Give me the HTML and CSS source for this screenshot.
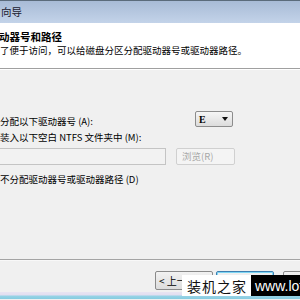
FILE: index.html
```html
<!DOCTYPE html>
<html>
<head>
<meta charset="utf-8">
<link rel="stylesheet" href="styles.css">
</head>
<body>
<div class="win">
  <div class="titlebar"><span class="ttl">向导</span></div>
  <div class="header">
    <div class="htitle">动器号和路径</div>
    <div class="hsub">了便于访问，可以给磁盘分区分配驱动器号或驱动器路径。</div>
  </div>
  <div class="sep"></div>
  <div class="body">
    <div class="row1">
      <span class="lbl">分配以下驱动器号 (A):</span>
      <div class="combo"><span class="cv">E</span><span class="arr"></span></div>
    </div>
    <div class="lbl2">装入以下空白 NTFS 文件夹中 (M):</div>
    <div class="row2">
      <div class="inp"></div>
      <div class="browse">浏览(R)</div>
    </div>
    <div class="lbl3">不分配驱动器号或驱动器路径 (D)</div>
  </div>
  <div class="sep2"></div>
  <div class="btns">
    <div class="btn">&lt; 上一步(B)</div>
    <div class="btn def">下一步(N) &gt;</div>
    <div class="btn">取消</div>
  </div>
  <div class="frame"></div>
  <div class="wm"><span class="wm1">装机之家</span><span class="wm2">www.lotpc.com</span></div>
</div>
</body>
</html>
```
FILE: styles.css
```css
html, body { margin: 0; padding: 0; }
body {
  width: 300px; height: 300px; overflow: hidden;
  font-family: "Noto Sans CJK SC", "Liberation Sans", sans-serif;
  font-size: 9.5px; color: #000; background: #f0f0f0;
}
.win { position: relative; width: 300px; height: 300px; display: flex; flex-direction: column; overflow: hidden; }
.titlebar {
  height: 23px; box-sizing: border-box; flex: none;
  border-top: 1px solid #5b6b7b;
  background: linear-gradient(#a8bbd6, #c3d3e9);
  display: flex; align-items: center;
}
.ttl { font-size: 10.5px; color: #1a2030; margin-left: 1px; line-height: 1; }
.header { height: 45px; flex: none; background: #fff; box-sizing: border-box; padding-top: 8px; white-space: nowrap; }
.htitle { font-weight: bold; font-size: 10.5px; line-height: 11px; margin-left: -1px; }
.hsub { margin-top: 3px; line-height: 11px; }
.sep { height: 1px; flex: none; background: #a0a0a0; border-bottom: 1px solid #fff; }
.body { height: 189px; flex: none; box-sizing: border-box; padding-top: 41px; background: #f0f0f0; white-space: nowrap; }
.row1 { display: flex; align-items: center; height: 16px; }
.lbl { line-height: 10px; margin-top: 4px; }
.combo {
  margin-left: 102px; width: 38px; height: 16px; box-sizing: border-box;
  border: 1px solid #8c8c8c; border-radius: 2px;
  background: linear-gradient(#f6f6f6, #dcdcdc);
  display: flex; align-items: center; justify-content: space-between; padding: 0 4px 0 3px;
}
.cv { font-family: "Liberation Serif", serif; font-weight: bold; font-size: 10px; }
.arr { width: 0; height: 0; border-left: 3.5px solid transparent; border-right: 3.5px solid transparent; border-top: 4px solid #111; }
.lbl2 { margin-top: 5px; line-height: 11px; }
.row2 { display: flex; margin-top: 5px; height: 17px; }
.inp { width: 168px; box-sizing: border-box; border: 1px solid #c4c4c4; background: #f2f2f2; margin-left: -2px; }
.browse {
  margin-left: 10px; width: 59px; box-sizing: border-box;
  border: 1px solid #d0d0d0; border-radius: 2px; background: #f4f4f4;
  color: #a8a8a8; display: flex; align-items: center; padding-left: 5px; line-height: 1;
}
.lbl3 { margin-top: 9px; line-height: 10px; }
.sep2 { height: 1px; flex: none; background: #a4a4a4; border-bottom: 1px solid #f8f8f8; }
.btns { height: 31px; flex: none; display: flex; padding-top: 10px; box-sizing: border-box; gap: 3px; padding-left: 155px; white-space: nowrap; }
.btn {
  flex: none; width: 58px; height: 19px; box-sizing: border-box;
  border: 1px solid #8a8a8a; border-radius: 2px;
  background: linear-gradient(#f2f2f2, #dcdcdc);
  display: flex; align-items: center; padding-left: 3px; font-size: 10px; line-height: 1;
}
.btn.def { border-color: #3c7fb1; box-shadow: inset 0 0 0 1px #7fd6f4; }
.btn:last-child { margin-left: 6px; }
.frame { height: 7px; flex: none; background: linear-gradient(#e8e4f2 0, #e2def0 3px, #97d3e6 4px, #86cbe0 100%); }
.wm { position: absolute; left: 182px; top: 275px; display: flex; align-items: stretch; height: 21px; white-space: nowrap; }
.wm1 { flex: none; background: #fff; color: #111; font-size: 14px; padding: 0 4px 0 5px; display: flex; align-items: center; letter-spacing: 1px; font-family: "Noto Sans CJK SC", sans-serif; }
.wm2 { flex: none; background: #000; color: #fff; font-size: 14px; padding: 0 4px; display: flex; align-items: center; font-family: "Liberation Sans", sans-serif; }
```
